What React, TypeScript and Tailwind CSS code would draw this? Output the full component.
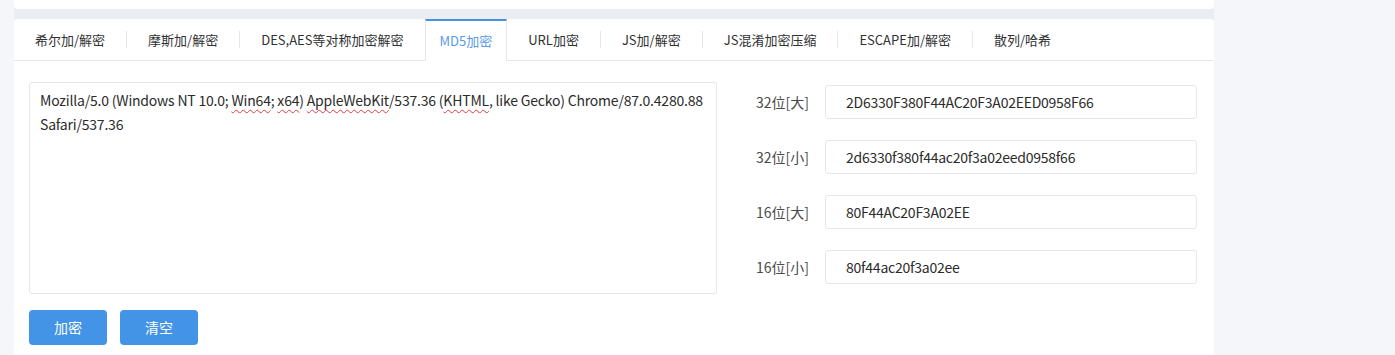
const tabs = [
  "希尔加/解密",
  "摩斯加/解密",
  "DES,AES等对称加密解密",
  "MD5加密",
  "URL加密",
  "JS加/解密",
  "JS混淆加密压缩",
  "ESCAPE加/解密",
  "散列/哈希",
];

const active = 3;

const results = [
  { label: "32位[大]", value: "2D6330F380F44AC20F3A02EED0958F66" },
  { label: "32位[小]", value: "2d6330f380f44ac20f3a02eed0958f66" },
  { label: "16位[大]", value: "80F44AC20F3A02EE" },
  { label: "16位[小]", value: "80f44ac20f3a02ee" },
];

function Squiggle({ children }: { children: React.ReactNode }) {
  return (
    <span className="underline decoration-wavy decoration-[#e23b3b] decoration-1 underline-offset-[3px]">
      {children}
    </span>
  );
}

export default function App() {
  return (
    <div
      className="flex h-[355px] w-[1395px] overflow-hidden bg-[#f4f6f9] text-[14px] text-[#333]"
      style={{ fontFamily: '"Noto Sans CJK SC", "Noto Sans", sans-serif' }}
    >
      <div className="w-[14px] shrink-0" />
      <div className="flex w-[1200px] shrink-0 flex-col bg-[#eaedf1]">
        <div className="h-[9px] rounded-b-[4px] bg-white" />
        <div className="mt-[10px] flex-1 rounded-t-[4px] bg-white">
          {/* tab strip */}
          <div className="flex h-[42px] items-stretch border-b border-[#e4e7ed] text-[13px]">
            {tabs.map((t, i) => {
              const isActive = i === active;
              const showSep = i > 0 && i !== active && i !== active + 1;
              return (
                <div key={t} className="flex items-center">
                  {showSep && <span className="h-[17px] w-px bg-[#e4e7ed]" />}
                  {isActive ? (
                    <div className="relative -mb-px flex h-[42px] items-center border-x border-t-2 border-[#e4e7ed] border-t-[#4a90e2] bg-white px-[14px] text-[#5a9be8]">
                      {t}
                    </div>
                  ) : (
                    <div className="flex h-full items-center px-[21px] text-[#303133]">{t}</div>
                  )}
                </div>
              );
            })}
          </div>

          {/* body */}
          <div className="flex px-[15px] pt-[21px]">
            <div className="flex flex-col">
              <div className="h-[212px] w-[688px] rounded-[3px] border border-[#e4e7ed] px-[10px] py-[5px] leading-[24px] tracking-[-0.2px] text-[#2b2b2b]">
                Mozilla/5.0 (Windows NT 10.0; <Squiggle>Win64</Squiggle>; <Squiggle>x64</Squiggle>){" "}
                <Squiggle>AppleWebKit</Squiggle>/537.36 (<Squiggle>KHTML</Squiggle>, like Gecko)
                Chrome/87.0.4280.88 Safari/537.36
              </div>
              <div className="mt-[16px] flex gap-[13px]">
                <button className="h-[35px] w-[78px] rounded-[4px] bg-[#4394e6] text-white">加密</button>
                <button className="h-[35px] w-[78px] rounded-[4px] bg-[#4394e6] text-white">清空</button>
              </div>
            </div>

            <div className="ml-[39px] flex flex-col gap-[21px] pt-[3px]">
              {results.map((r) => (
                <div key={r.label} className="flex items-center">
                  <span className="w-[69px] text-[#4a4a4a]">{r.label}</span>
                  <div className="flex h-[34px] w-[372px] items-center rounded-[3px] border border-[#e4e7ed] px-[20px] tracking-[-0.25px] text-[#2b2b2b]">
                    {r.value}
                  </div>
                </div>
              ))}
            </div>
          </div>
        </div>
      </div>
    </div>
  );
}
